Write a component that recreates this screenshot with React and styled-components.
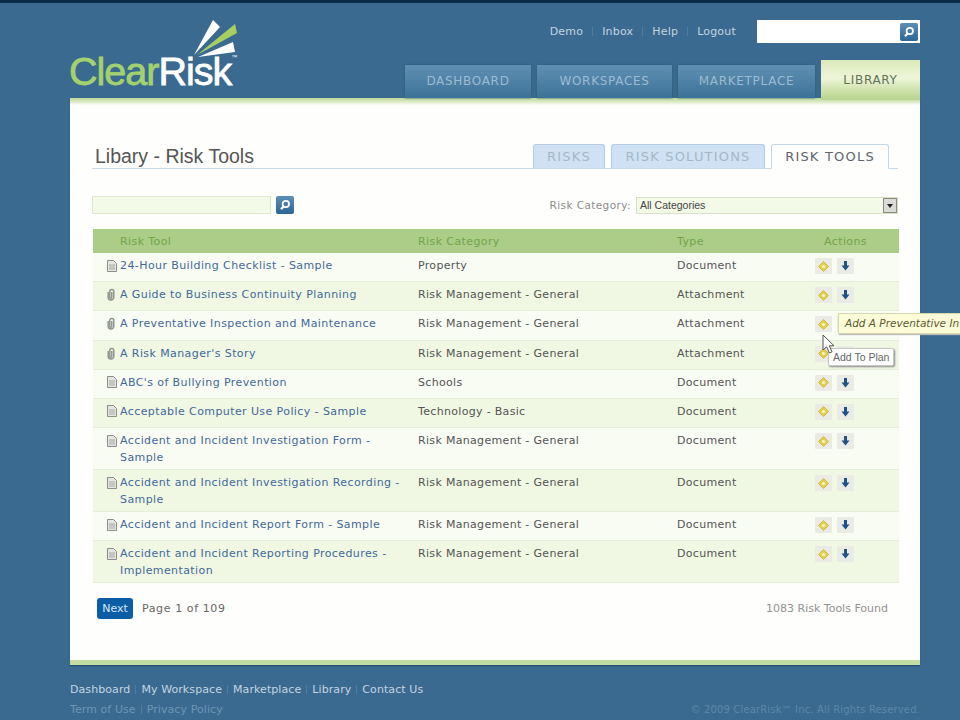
import React from "react";
import styled, { createGlobalStyle } from "styled-components";

const GlobalStyle = createGlobalStyle`
  html, body {
    margin: 0;
    padding: 0;
    height: 720px;
    overflow: hidden;
    background: #3a6a8f;
  }
  body {
    font-family: "DejaVu Sans", Verdana, sans-serif;
    font-size: 11px;
  }
`;

const rows = [
  { name: ["24-Hour Building Checklist - Sample"], cat: "Property", type: "Document" },
  { name: ["A Guide to Business Continuity Planning"], cat: "Risk Management - General", type: "Attachment" },
  { name: ["A Preventative Inspection and Maintenance"], cat: "Risk Management - General", type: "Attachment", tip: true },
  { name: ["A Risk Manager's Story"], cat: "Risk Management - General", type: "Attachment", plan: true },
  { name: ["ABC's of Bullying Prevention"], cat: "Schools", type: "Document" },
  { name: ["Acceptable Computer Use Policy - Sample"], cat: "Technology - Basic", type: "Document" },
  { name: ["Accident and Incident Investigation Form -", "Sample"], cat: "Risk Management - General", type: "Document" },
  { name: ["Accident and Incident Investigation Recording -", "Sample"], cat: "Risk Management - General", type: "Document" },
  { name: ["Accident and Incident Report Form - Sample"], cat: "Risk Management - General", type: "Document" },
  { name: ["Accident and Incident Reporting Procedures -", "Implementation"], cat: "Risk Management - General", type: "Document" },
];

const SearchIcon = () => (
  <svg width="12" height="12" viewBox="0 0 12 12" fill="none">
    <circle cx="6.8" cy="5" r="3.2" stroke="#fff" strokeWidth="1.8" />
    <path d="M4.6 7.4 2 10.2" stroke="#fff" strokeWidth="2.2" />
  </svg>
);

const DocIcon = () => (
  <svg width="10" height="12" viewBox="0 0 10 12">
    <path d="M.5.5h6l3 3v8h-9z" fill="#e6e6e0" stroke="#8d8d8d" />
    <path d="M2 5h6M2 7h6M2 9h6" stroke="#a5a5a5" />
  </svg>
);

const ClipIcon = () => (
  <svg width="8" height="13" viewBox="0 0 8 13" fill="none">
    <path d="M1.2 4v5.2a2.8 2.8 0 0 0 5.6 0V3.4a2 2 0 0 0-4 0v5.8a1 1 0 0 0 2 0V4" stroke="#8f968c" strokeWidth="1.5" />
  </svg>
);

const PlanIcon = () => (
  <svg width="11" height="11" viewBox="0 0 11 11">
    <path d="M5.5.5 10.5 5.5 5.5 10.5.5 5.5z" fill="#e3cf4f" stroke="#d2bc3a" strokeLinejoin="round" />
    <circle cx="5.5" cy="5.5" r="1.6" fill="#fbf6c8" />
  </svg>
);

const DownIcon = () => (
  <svg width="9" height="10" viewBox="0 0 9 10">
    <path d="M3 0h3v4.5h2.5L4.5 9.5.5 4.5H3z" fill="#1d5289" />
  </svg>
);

const Logo = () => (
  <LogoWrap>
    <LogoRays width="50" height="44" viewBox="0 0 50 44">
      <path d="M0 38 19 3 26 10z" fill="#fff" />
      <path d="M3 38 41 7 43 16z" fill="#a9cf62" />
      <path d="M4 40 39 25 41 35z" fill="#fff" />
    </LogoRays>
    <LogoText>
      <span>Clear</span>Risk<sup>™</sup>
    </LogoText>
  </LogoWrap>
);

export default function App() {
  return (
    <>
      <GlobalStyle />
      <TopEdge />
      <Page>
        <Header>
          <Logo />
          <HeaderRight>
            <UtilBar>
              <UtilLinks>
                <UtilLink>Demo</UtilLink>
                <UtilLink>Inbox</UtilLink>
                <UtilLink>Help</UtilLink>
                <UtilLink>Logout</UtilLink>
              </UtilLinks>
              <TopSearch>
                <IconButton><SearchIcon /></IconButton>
              </TopSearch>
            </UtilBar>
            <MainNav>
              <MainTab $w={126}>DASHBOARD</MainTab>
              <MainTab $w={135}>WORKSPACES</MainTab>
              <MainTab $w={137}>MARKETPLACE</MainTab>
              <MainTab $w={99} $active>LIBRARY</MainTab>
            </MainNav>
          </HeaderRight>
        </Header>

        <Panel>
          <TitleRow>
            <Title>Libary - Risk Tools</Title>
            <SubTabs>
              <SubTab $w={72}>RISKS</SubTab>
              <SubTab $w={154}>RISK SOLUTIONS</SubTab>
              <SubTab $w={118} $active>RISK TOOLS</SubTab>
            </SubTabs>
          </TitleRow>

          <FilterRow>
            <SearchGroup>
              <FilterInput />
              <IconButton><SearchIcon /></IconButton>
            </SearchGroup>
            <CategoryGroup>
              <CategoryLabel>Risk Category:</CategoryLabel>
              <SelectBox>
                All Categories
                <SelectArrow />
              </SelectBox>
            </CategoryGroup>
          </FilterRow>

          <Table>
            <HeadRow>
              <HeadCell $pad={27}>Risk Tool</HeadCell>
              <HeadCell>Risk Category</HeadCell>
              <HeadCell>Type</HeadCell>
              <HeadCell $pad={9}>Actions</HeadCell>
            </HeadRow>
            {rows.map((row, i) => (
              <Row key={row.name[0]} $even={i % 2 === 1}>
                <NameCell>
                  <FileIcon>{row.type === "Document" ? <DocIcon /> : <ClipIcon />}</FileIcon>
                  <NameLink>
                    {row.name.map((line) => (
                      <div key={line}>{line}</div>
                    ))}
                  </NameLink>
                </NameCell>
                <Cell>{row.cat}</Cell>
                <Cell>{row.type}</Cell>
                <Actions>
                  <ActionButton><PlanIcon /></ActionButton>
                  <ActionButton><DownIcon /></ActionButton>
                  {row.tip && <YellowTip>Add A Preventative In</YellowTip>}
                  {row.plan && <PlanTip>Add To Plan</PlanTip>}
                  {row.tip && (
                    <Cursor width="13" height="20" viewBox="0 0 13 20">
                      <path d="M1 1v15l3.6-3.2L7.4 19l2.6-1.2-2.7-6H12z" fill="#fff" stroke="#555" />
                    </Cursor>
                  )}
                </Actions>
              </Row>
            ))}
          </Table>

          <Pager>
            <PagerLeft>
              <NextButton>Next</NextButton>
              <PageText>Page 1 of 109</PageText>
            </PagerLeft>
            <FoundText>1083 Risk Tools Found</FoundText>
          </Pager>
        </Panel>

        <Footer>
          <FooterLinks>
            <FooterLink>Dashboard</FooterLink>
            <FooterLink>My Workspace</FooterLink>
            <FooterLink>Marketplace</FooterLink>
            <FooterLink>Library</FooterLink>
            <FooterLink>Contact Us</FooterLink>
          </FooterLinks>
          <FooterBottom>
            <FooterLinks>
              <FooterLink $dim>Term of Use</FooterLink>
              <FooterLink $dim>Privacy Policy</FooterLink>
            </FooterLinks>
            <Copyright>© 2009 ClearRisk™ Inc. All Rights Reserved.</Copyright>
          </FooterBottom>
        </Footer>
      </Page>
    </>
  );
}

const TopEdge = styled.div`
  height: 3px;
  background: #0b2c49;
`;

const Page = styled.div`
  width: 850px;
  margin-left: 70px;
`;

const Header = styled.header`
  display: flex;
  justify-content: space-between;
  height: 95px;
`;

const LogoWrap = styled.div`
  position: relative;
  width: 180px;
  padding-top: 46px;
`;

const LogoRays = styled.svg`
  position: absolute;
  left: 124px;
  top: 14px;
`;

const LogoText = styled.div`
  font-family: "Liberation Sans", Arial, sans-serif;
  font-size: 39.5px;
  line-height: 44px;
  letter-spacing: -1px;
  margin-left: -1px;
  color: #fff;
  -webkit-text-stroke: 0.8px currentColor;

  span {
    color: #a4d16f;
  }

  sup {
    font-size: 6px;
    vertical-align: 26px;
    letter-spacing: 0;
    -webkit-text-stroke: 0;
    line-height: 0;
  }
`;

const HeaderRight = styled.div`
  display: flex;
  flex-direction: column;
  align-items: flex-end;
`;

const UtilBar = styled.div`
  display: flex;
  align-items: center;
  gap: 21px;
  padding-top: 17px;
  height: 23px;
`;

const UtilLinks = styled.nav`
  display: flex;
  gap: 19px;
`;

const UtilLink = styled.a`
  position: relative;
  color: #c3d4e1;
  font-size: 11px;
  letter-spacing: 0.2px;

  & + &::before {
    content: "";
    position: absolute;
    left: -10px;
    top: 2px;
    bottom: 2px;
    width: 1px;
    background: #4d7ea1;
  }
`;

const TopSearch = styled.div`
  width: 163px;
  height: 23px;
  background: #fff;
  display: flex;
  justify-content: flex-end;
  align-items: center;
  padding-right: 2px;
  box-sizing: border-box;
`;

const IconButton = styled.button`
  width: 18px;
  height: 18px;
  padding: 0;
  border: 0;
  border-radius: 2px;
  background: linear-gradient(#5d8fb5, #2c6594);
  display: flex;
  align-items: center;
  justify-content: center;
`;

const MainNav = styled.nav`
  display: flex;
  align-items: flex-end;
  gap: 6px;
  margin-top: 15px;
  height: 40px;
`;

const MainTab = styled.a`
  position: relative;
  z-index: 1;
  width: ${(p) => p.$w}px;
  height: ${(p) => (p.$active ? 40 : 33)}px;
  margin-bottom: ${(p) => (p.$active ? -2 : 0)}px;
  padding-bottom: ${(p) => (p.$active ? 0 : 2)}px;
  box-sizing: border-box;
  display: flex;
  align-items: center;
  justify-content: center;
  font-size: 12px;
  letter-spacing: 0.7px;
  color: ${(p) => (p.$active ? "#5f7355" : "#9dbbd0")};
  box-shadow: ${(p) => (p.$active ? "none" : "0 0 2px #2c5878")};
  background: ${(p) =>
    p.$active
      ? "linear-gradient(#dbe9b9, #eef5d8 45%, #b6d38c)"
      : "linear-gradient(#5f90b3, #3d7297)"};
`;

const Panel = styled.main`
  background: linear-gradient(#bcd897, #e6f0d4 5px, #fefefc 7px);
  border-bottom: 5px solid #c3dca0;
  box-shadow: 0 1px 1px #24506f;
  height: 567px;
  box-sizing: border-box;
  padding: 45px 21px 0 22px;
`;

const TitleRow = styled.div`
  display: flex;
  justify-content: space-between;
  align-items: flex-end;
  height: 25px;
  border-bottom: 1px solid #c9d9e6;
  margin-right: 1px;
  padding-right: 9px;
`;

const Title = styled.h1`
  margin: 0 0 -1px 3px;
  font-family: "Liberation Sans", Arial, sans-serif;
  font-size: 19.5px;
  font-weight: 400;
  line-height: 26px;
  color: #555;
`;

const SubTabs = styled.div`
  display: flex;
  gap: 6px;
  margin-bottom: -1px;
`;

const SubTab = styled.a`
  width: ${(p) => p.$w}px;
  height: 25px;
  box-sizing: border-box;
  border: 1px solid ${(p) => (p.$active ? "#c4d6e4" : "#b5cde2")};
  border-bottom: ${(p) => (p.$active ? "1px solid #fefefc" : "1px solid #c9d9e6")};
  border-radius: 3px 3px 0 0;
  background: ${(p) => (p.$active ? "#fefefc" : "#cfe1f3")};
  color: ${(p) => (p.$active ? "#5d6670" : "#a5b8c9")};
  font-size: 13px;
  letter-spacing: 1.2px;
  display: flex;
  align-items: center;
  justify-content: center;
`;

const FilterRow = styled.div`
  display: flex;
  justify-content: space-between;
  align-items: center;
  margin-top: 27px;
  height: 18px;
  padding-right: 1px;
`;

const SearchGroup = styled.div`
  display: flex;
  align-items: center;
  gap: 5px;
`;

const FilterInput = styled.div`
  width: 179px;
  height: 18px;
  box-sizing: border-box;
  background: #f3fae8;
  border: 1px solid #dfe8cc;
`;

const CategoryGroup = styled.div`
  display: flex;
  align-items: center;
  gap: 5px;
`;

const CategoryLabel = styled.span`
  color: #8c8c8c;
  font-size: 10.5px;
  letter-spacing: 0.4px;
`;

const SelectBox = styled.div`
  position: relative;
  width: 262px;
  height: 17px;
  box-sizing: border-box;
  background: #f3fae8;
  border: 1px solid #d9e2c8;
  padding-left: 3px;
  font-family: "Liberation Sans", Arial, sans-serif;
  font-size: 10.5px;
  line-height: 15px;
  color: #444;
`;

const SelectArrow = styled.i`
  position: absolute;
  right: 0;
  top: 0;
  width: 14px;
  height: 15px;
  box-sizing: border-box;
  background: #dcdcd6;
  border: 1px solid #8a8a84;

  &::after {
    content: "";
    position: absolute;
    left: 3px;
    top: 5px;
    border: 3px solid transparent;
    border-top: 4px solid #222;
    border-bottom: 0;
  }
`;

const Table = styled.div`
  margin: 15px 0 0 1px;
  width: 806px;
`;

const gridColumns = `325px 259px 138px 84px`;

const HeadRow = styled.div`
  display: grid;
  grid-template-columns: ${gridColumns};
  align-items: center;
  height: 24px;
  background: #abcd87;
`;

const HeadCell = styled.div`
  color: #74a34a;
  font-size: 11px;
  letter-spacing: 0.4px;
  padding-left: ${(p) => p.$pad || 0}px;
`;

const Row = styled.div`
  display: grid;
  grid-template-columns: ${gridColumns};
  align-items: start;
  box-sizing: border-box;
  min-height: 29.2px;
  padding: 4px 0 3px;
  background: ${(p) => (p.$even ? "#f0f8e4" : "#f9fcf3")};
  border-bottom: 1px solid #e4eed8;
  line-height: 17px;
`;

const NameCell = styled.div`
  display: flex;
  padding-left: 14px;
`;

const FileIcon = styled.span`
  width: 13px;
  height: 17px;
  display: flex;
  align-items: center;
  flex: none;
`;

const NameLink = styled.a`
  color: #43699a;
  letter-spacing: 0.41px;
`;

const Cell = styled.div`
  color: #555;
  letter-spacing: 0.32px;
`;

const Actions = styled.div`
  position: relative;
  display: flex;
  gap: 5px;
  padding-top: 1px;
`;

const ActionButton = styled.button`
  width: 17px;
  height: 16px;
  padding: 0;
  border: 0;
  border-radius: 1px;
  background: #e9ebe4;
  display: flex;
  align-items: center;
  justify-content: center;
`;

const YellowTip = styled.div`
  position: absolute;
  left: 23px;
  top: -2px;
  height: 21px;
  width: 122px;
  box-sizing: border-box;
  padding-left: 6px;
  line-height: 19px;
  white-space: nowrap;
  font-size: 10.5px;
  font-style: italic;
  color: #5c5c30;
  background: #fbfbd8;
  border: 1px solid #d8d8b0;
  border-right: 0;
  box-shadow: 1px 1px 1px #bbb;
`;

const PlanTip = styled.div`
  position: absolute;
  left: 13px;
  top: 3px;
  z-index: 2;
  padding: 0 4px;
  height: 16px;
  line-height: 16px;
  white-space: nowrap;
  font-family: "Liberation Sans", Arial, sans-serif;
  font-size: 10.5px;
  color: #666;
  background: #fff;
  border: 1px solid #c8c8c8;
  border-radius: 2px;
  box-shadow: 1px 1px 2px #888;
`;

const Cursor = styled.svg`
  position: absolute;
  left: 7px;
  top: 19px;
  z-index: 3;
`;

const Pager = styled.div`
  display: flex;
  justify-content: space-between;
  align-items: center;
  margin: 15px 0 0 5px;
  width: 791px;
  height: 21px;
`;

const PagerLeft = styled.div`
  display: flex;
  align-items: center;
  gap: 9px;
`;

const NextButton = styled.button`
  width: 36px;
  height: 21px;
  padding: 0;
  border: 0;
  border-radius: 3px;
  background: #0b5ea6;
  color: #d7e8f5;
  font-family: inherit;
  font-size: 11px;
`;

const PageText = styled.span`
  color: #666;
  letter-spacing: 0.6px;
`;

const FoundText = styled.span`
  color: #929292;
`;

const Footer = styled.footer`
  padding-top: 16px;
`;

const FooterLinks = styled.nav`
  display: flex;
  gap: 11px;
`;

const FooterLink = styled.a`
  position: relative;
  color: ${(p) => (p.$dim ? "#6c95b5" : "#c3d4e1")};
  font-size: 11px;
  line-height: 17px;
  letter-spacing: 0.08px;

  & + &::before {
    content: "";
    position: absolute;
    left: -6px;
    top: 4px;
    bottom: 4px;
    width: 1px;
    background: #4d7ea1;
  }
`;

const FooterBottom = styled.div`
  display: flex;
  justify-content: space-between;
  margin-top: 3px;
`;

const Copyright = styled.span`
  color: #5a88aa;
  font-size: 10px;
  line-height: 17px;
  letter-spacing: 0.15px;
`;
